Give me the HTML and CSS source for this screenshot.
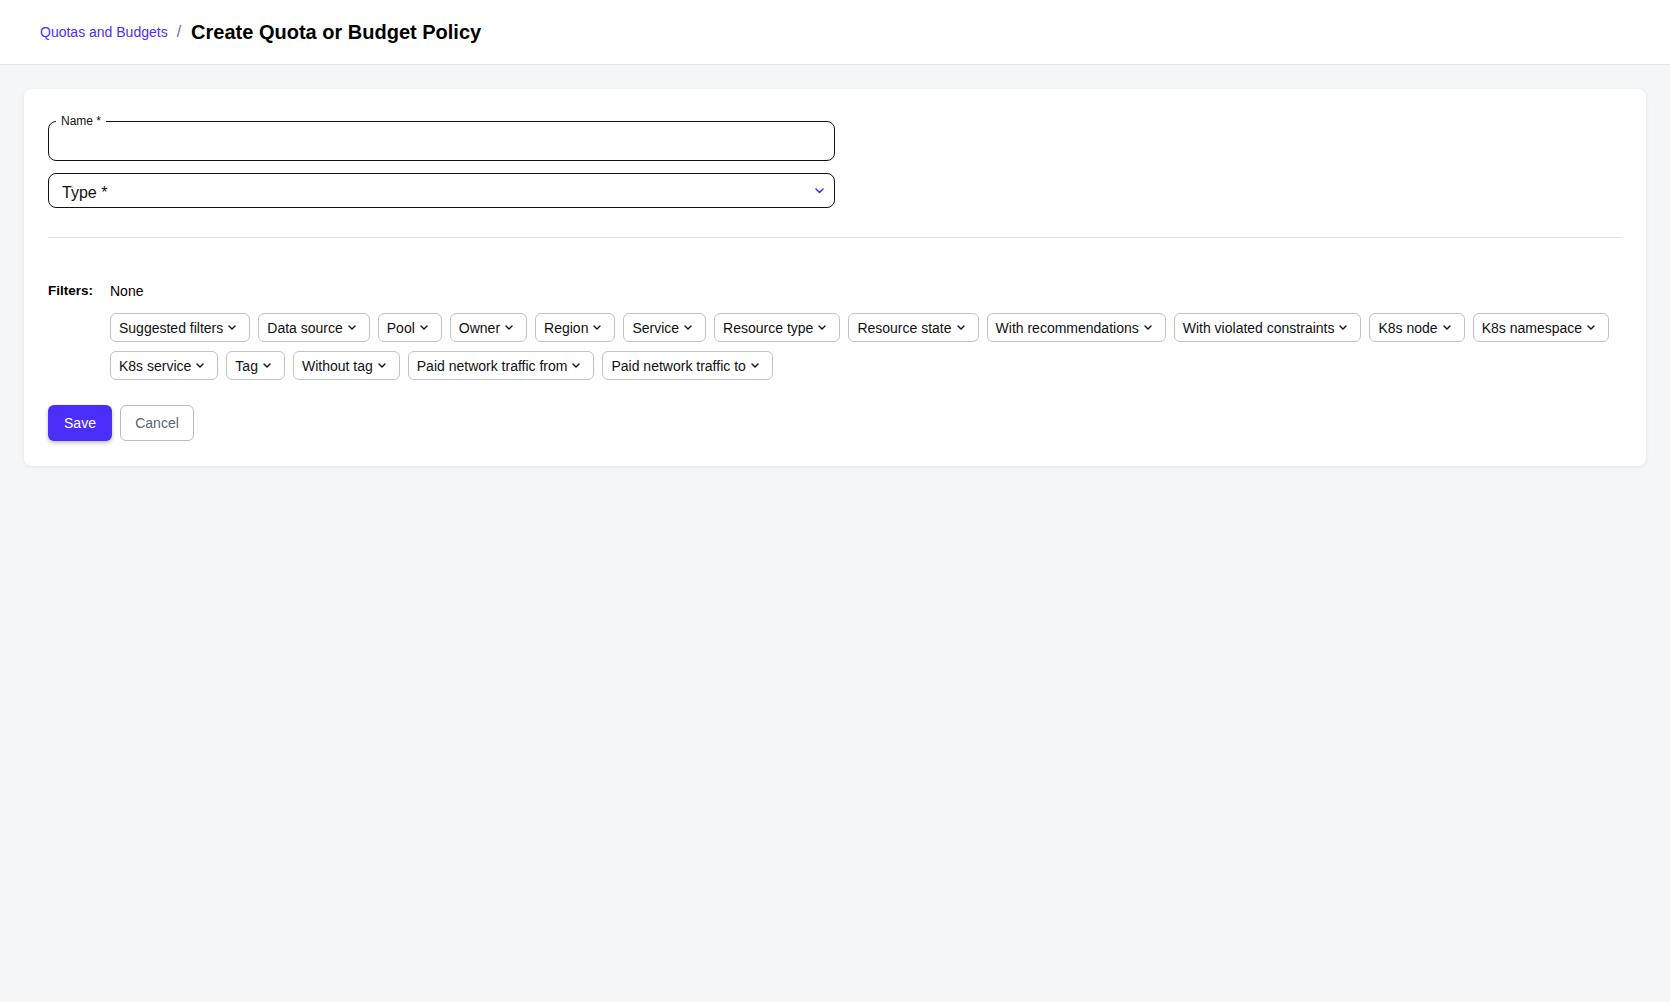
FILE: index.html
```html
<!DOCTYPE html>
<html lang="en">
<head>
<meta charset="utf-8">
<title>Create Quota or Budget Policy</title>
<link rel="stylesheet" href="styles.css">
</head>
<body>
<header class="top-bar">
  <a class="crumb-link" href="#">Quotas and Budgets</a>
  <span class="crumb-sep">/</span>
  <h1 class="page-title">Create Quota or Budget Policy</h1>
</header>
<main class="page">
  <section class="card">
    <fieldset class="outlined-field">
      <legend class="field-legend">Name *</legend>
      <input class="field-input" type="text">
    </fieldset>
    <div class="select-field">
      <span class="select-label">Type *</span>
      <svg class="select-chevron" width="9" height="6" viewBox="0 0 9 6"><path d="M1 1l3.5 3.5L8 1" fill="none" stroke="#4b2ef9" stroke-width="1.6" stroke-linecap="round" stroke-linejoin="round"/></svg>
    </div>
    <hr class="divider">
    <div class="filters">
      <div class="filters-label">Filters:</div>
      <div class="filters-body">
        <div class="filters-value">None</div>
        <div class="chips">
          <button class="chip">Suggested filters<svg class="chev" width="8" height="5" viewBox="0 0 8 5"><path d="M1 1l3 3 3-3" fill="none" stroke="#111" stroke-width="1.4" stroke-linecap="round" stroke-linejoin="round"/></svg></button>
          <button class="chip">Data source<svg class="chev" width="8" height="5" viewBox="0 0 8 5"><path d="M1 1l3 3 3-3" fill="none" stroke="#111" stroke-width="1.4" stroke-linecap="round" stroke-linejoin="round"/></svg></button>
          <button class="chip">Pool<svg class="chev" width="8" height="5" viewBox="0 0 8 5"><path d="M1 1l3 3 3-3" fill="none" stroke="#111" stroke-width="1.4" stroke-linecap="round" stroke-linejoin="round"/></svg></button>
          <button class="chip">Owner<svg class="chev" width="8" height="5" viewBox="0 0 8 5"><path d="M1 1l3 3 3-3" fill="none" stroke="#111" stroke-width="1.4" stroke-linecap="round" stroke-linejoin="round"/></svg></button>
          <button class="chip">Region<svg class="chev" width="8" height="5" viewBox="0 0 8 5"><path d="M1 1l3 3 3-3" fill="none" stroke="#111" stroke-width="1.4" stroke-linecap="round" stroke-linejoin="round"/></svg></button>
          <button class="chip">Service<svg class="chev" width="8" height="5" viewBox="0 0 8 5"><path d="M1 1l3 3 3-3" fill="none" stroke="#111" stroke-width="1.4" stroke-linecap="round" stroke-linejoin="round"/></svg></button>
          <button class="chip">Resource type<svg class="chev" width="8" height="5" viewBox="0 0 8 5"><path d="M1 1l3 3 3-3" fill="none" stroke="#111" stroke-width="1.4" stroke-linecap="round" stroke-linejoin="round"/></svg></button>
          <button class="chip">Resource state<svg class="chev" width="8" height="5" viewBox="0 0 8 5"><path d="M1 1l3 3 3-3" fill="none" stroke="#111" stroke-width="1.4" stroke-linecap="round" stroke-linejoin="round"/></svg></button>
          <button class="chip">With recommendations<svg class="chev" width="8" height="5" viewBox="0 0 8 5"><path d="M1 1l3 3 3-3" fill="none" stroke="#111" stroke-width="1.4" stroke-linecap="round" stroke-linejoin="round"/></svg></button>
          <button class="chip">With violated constraints<svg class="chev" width="8" height="5" viewBox="0 0 8 5"><path d="M1 1l3 3 3-3" fill="none" stroke="#111" stroke-width="1.4" stroke-linecap="round" stroke-linejoin="round"/></svg></button>
          <button class="chip">K8s node<svg class="chev" width="8" height="5" viewBox="0 0 8 5"><path d="M1 1l3 3 3-3" fill="none" stroke="#111" stroke-width="1.4" stroke-linecap="round" stroke-linejoin="round"/></svg></button>
          <button class="chip">K8s namespace<svg class="chev" width="8" height="5" viewBox="0 0 8 5"><path d="M1 1l3 3 3-3" fill="none" stroke="#111" stroke-width="1.4" stroke-linecap="round" stroke-linejoin="round"/></svg></button>
          <button class="chip">K8s service<svg class="chev" width="8" height="5" viewBox="0 0 8 5"><path d="M1 1l3 3 3-3" fill="none" stroke="#111" stroke-width="1.4" stroke-linecap="round" stroke-linejoin="round"/></svg></button>
          <button class="chip">Tag<svg class="chev" width="8" height="5" viewBox="0 0 8 5"><path d="M1 1l3 3 3-3" fill="none" stroke="#111" stroke-width="1.4" stroke-linecap="round" stroke-linejoin="round"/></svg></button>
          <button class="chip">Without tag<svg class="chev" width="8" height="5" viewBox="0 0 8 5"><path d="M1 1l3 3 3-3" fill="none" stroke="#111" stroke-width="1.4" stroke-linecap="round" stroke-linejoin="round"/></svg></button>
          <button class="chip">Paid network traffic from<svg class="chev" width="8" height="5" viewBox="0 0 8 5"><path d="M1 1l3 3 3-3" fill="none" stroke="#111" stroke-width="1.4" stroke-linecap="round" stroke-linejoin="round"/></svg></button>
          <button class="chip">Paid network traffic to<svg class="chev" width="8" height="5" viewBox="0 0 8 5"><path d="M1 1l3 3 3-3" fill="none" stroke="#111" stroke-width="1.4" stroke-linecap="round" stroke-linejoin="round"/></svg></button>
        </div>
      </div>
    </div>
    <div class="actions">
      <button class="btn btn-primary">Save</button>
      <button class="btn btn-outline">Cancel</button>
    </div>
  </section>
</main>
</body>
</html>
```

FILE: styles.css
```css
* { box-sizing: border-box; }
html, body {
  margin: 0;
  padding: 0;
}
body {
  font-family: "Liberation Sans", Arial, sans-serif;
  background: #f5f6f8;
  color: #000;
  min-height: 1002px;
}
.top-bar {
  height: 65px;
  background: #fff;
  border-bottom: 1px solid #e3e5e9;
  display: flex;
  align-items: center;
  padding: 0 0 0 40px;
}
.crumb-link {
  color: #4b2ef9;
  font-size: 14px;
  text-decoration: none;
}
.crumb-sep {
  color: #6b7280;
  font-size: 16px;
  margin: 0 10px 0 9px;
}
.page-title {
  margin: 0;
  font-size: 20px;
  font-weight: 700;
  color: #000;
}
.page {
  padding: 24px;
}
.card {
  background: #fff;
  border-radius: 8px;
  box-shadow: 0 1px 4px rgba(0, 0, 0, 0.07);
  padding: 24px 24px 25px;
}
.outlined-field {
  width: 50%;
  margin: 0;
  padding: 0 11px 0 7px;
  border: 1px solid #111;
  border-radius: 8px;
  min-width: 0;
}
.field-legend {
  font-size: 12px;
  line-height: 16px;
  padding: 0 5px;
  color: #111;
}
.field-input {
  display: block;
  width: 100%;
  height: 31px;
  border: 0;
  outline: none;
  background: transparent;
  font: inherit;
  font-size: 16px;
}
.select-field {
  width: 50%;
  height: 35px;
  margin-top: 12px;
  border: 1px solid #111;
  border-radius: 8px;
  display: flex;
  align-items: center;
  justify-content: space-between;
  padding: 0 10px 0 13px;
}
.select-label {
  font-size: 16px;
  color: #111;
  padding-top: 5px;
}
.select-chevron {
  display: block;
}
.divider {
  border: 0;
  border-top: 1px solid #e0e0e0;
  margin: 29px 0 0;
}
.filters {
  display: flex;
  margin-top: 43px;
}
.filters-label {
  width: 62px;
  flex: 0 0 62px;
  font-size: 13.5px;
  font-weight: 700;
  line-height: 20px;
}
.filters-body {
  flex: 1;
}
.filters-value {
  font-size: 14px;
  line-height: 20px;
}
.chips {
  display: flex;
  flex-wrap: wrap;
  column-gap: 8px;
  row-gap: 9px;
  margin-top: 12px;
}
.chip {
  height: 29px;
  display: inline-flex;
  align-items: center;
  padding: 0 13px 0 8px;
  background: #fff;
  border: 1px solid #c2c3ca;
  border-radius: 6px;
  font-family: inherit;
  font-size: 14px;
  color: #111;
  cursor: pointer;
}
.chev {
  display: block;
  margin-left: 5px;
}
.actions {
  display: flex;
  gap: 8px;
  margin-top: 25px;
}
.btn {
  height: 36px;
  border-radius: 6px;
  font-family: inherit;
  font-size: 14px;
  cursor: pointer;
}
.btn-primary {
  width: 64px;
  background: #4b2ef9;
  color: #fff;
  border: 0;
  box-shadow: 0 2px 4px rgba(0, 0, 0, 0.25);
  font-weight: 500;
}
.btn-outline {
  width: 74px;
  background: #fff;
  color: #5b6478;
  border: 1px solid #b9bcc6;
}
```
